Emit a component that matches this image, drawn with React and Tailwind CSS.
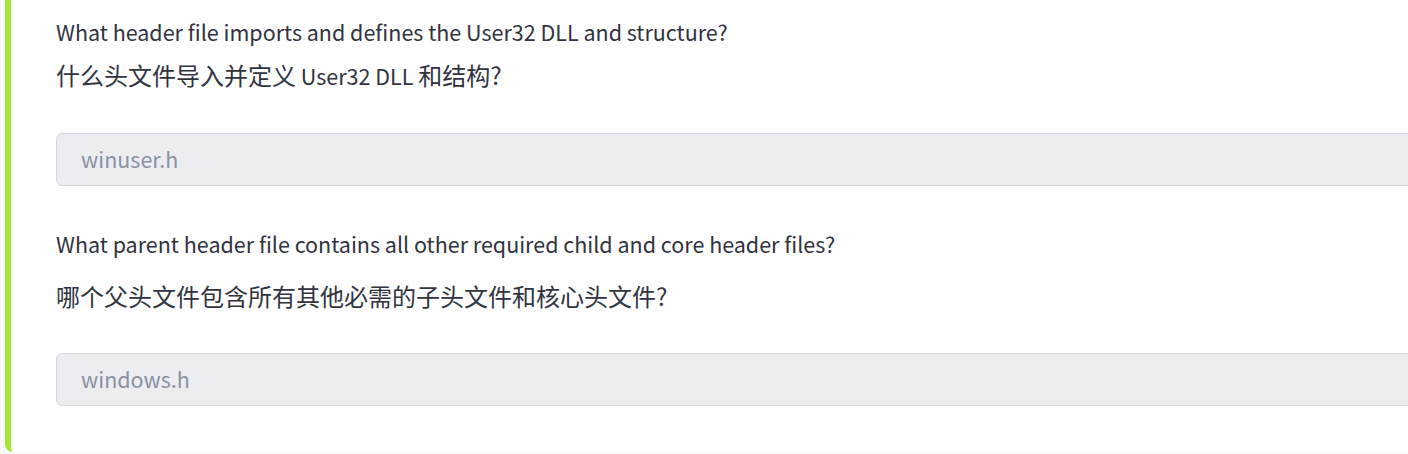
import React from 'react';

const items = [
    {
        en: 'What header file imports and defines the User32 DLL and structure?',
        zh: '什么头文件导入并定义 User32 DLL 和结构?',
        answer: 'winuser.h',
        gap: 'mt-[19px]',
    },
    {
        en: 'What parent header file contains all other required child and core header files?',
        zh: '哪个父头文件包含所有其他必需的子头文件和核心头文件?',
        answer: 'windows.h',
        gap: 'mt-[28px]',
    },
];

// latin runs inside the chinese line render a bit smaller than the CJK glyphs
const MixedLine = ({ text }) => {
    const parts = text.split(/( [A-Za-z0-9 ]+ )/);
    return parts.map((p, i) =>
        /[A-Za-z]/.test(p) ? <span key={i} className="text-[21.5px]">{p}</span> : <span key={i}>{p}</span>
    );
};

const QuestionBlock = ({ item }) => (
    <div>
        <p className="text-[21.5px] leading-[24px] text-[#31333f]">{item.en}</p>
        <p className={`${item.gap} text-[24px] leading-[24px] text-[#31333f]`}>
            <MixedLine text={item.zh} />
        </p>
        <div className="mt-[45px] h-[53px] rounded-md border border-[#d5d7dc] bg-[#ecedf1] px-6 flex items-center">
            <span className="text-[21.5px] text-[#8a91a3]">{item.answer}</span>
        </div>
    </div>
);

const App = () => {
    return (
        <div className="w-[1408px] h-[454px] overflow-hidden bg-[#f8f9fb] pl-[5px]" style={{ fontFamily: '"Noto Sans CJK SC", "Noto Sans", sans-serif' }}>
            <div className="w-[1440px] h-[452px] bg-white border-l-[6px] border-[#a3e635] rounded-bl-lg pl-[45px] pt-[20px]">
                <div className="flex flex-col gap-[46px]">
                    {items.map((item, i) => (
                        <QuestionBlock key={i} item={item} />
                    ))}
                </div>
            </div>
        </div>
    );
};

export default App;
